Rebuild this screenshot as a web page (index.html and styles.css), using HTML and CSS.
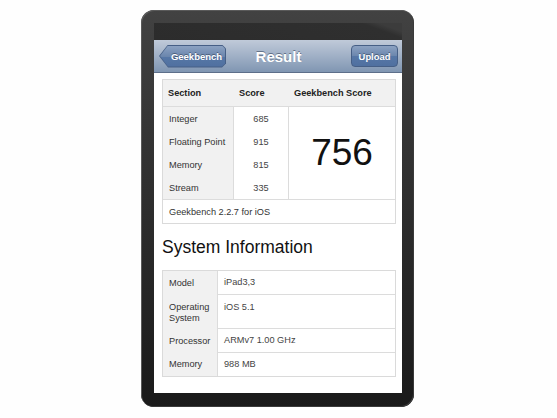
FILE: index.html
```html
<!DOCTYPE html>
<html>
<head>
<meta charset="utf-8">
<title>Geekbench Result</title>
<link rel="stylesheet" href="styles.css">
</head>
<body>
<div class="device">
  <div class="screen">
    <div class="status"></div>
    <div class="nav">
      <div class="back"><div class="back-in">Geekbench</div></div>
      <div class="title">Result</div>
      <div class="upload">Upload</div>
    </div>
    <div class="content">
      <div class="scores">
        <div class="shead">
          <div class="h1">Section</div>
          <div>Score</div>
          <div>Geekbench Score</div>
        </div>
        <div class="sbody">
          <div class="labels">
            <div class="row">Integer</div>
            <div class="row">Floating Point</div>
            <div class="row">Memory</div>
            <div class="row">Stream</div>
          </div>
          <div class="vals">
            <div class="row">685</div>
            <div class="row">915</div>
            <div class="row">815</div>
            <div class="row">335</div>
          </div>
          <div class="total">756</div>
        </div>
        <div class="sfoot">Geekbench 2.2.7 for iOS</div>
      </div>
      <h2 class="heading">System Information</h2>
      <div class="info">
        <div class="k r1">Model</div><div class="v r1">iPad3,3</div>
        <div class="k r2">Operating System</div><div class="v r2">iOS 5.1</div>
        <div class="k r3">Processor</div><div class="v r3">ARMv7 1.00 GHz</div>
        <div class="k r4">Memory</div><div class="v r4 last">988 MB</div>
      </div>
    </div>
  </div>
</div>
</body>
</html>
```
FILE: styles.css
```css
html, body {
  margin: 0;
  padding: 0;
  background: #fefefe;
}
body {
  font-family: "Liberation Sans", Arial, Helvetica, sans-serif;
}
.device {
  margin: 10px 0 0 141px;
  width: 273px;
  height: 397px;
  box-sizing: border-box;
  padding: 13px 12px 14px 13px;
  border-radius: 13px;
  background: linear-gradient(to bottom, #424242 0%, #333 35%, #242424 75%, #1a1a1a 100%);
  box-shadow: inset 1px 1px 0 #5a5a5a, inset -1px -1px 0 #3a3a3a;
}
.screen {
  height: 100%;
  display: flex;
  flex-direction: column;
  background: #fff;
}
.status {
  height: 17px;
  flex: none;
  background: linear-gradient(200deg, #3c3c3c 0%, #3c3c3c 8%, #2f2f2f 14%, #2c2c2c 100%);
}
.nav {
  height: 33px;
  flex: none;
  box-sizing: border-box;
  display: grid;
  grid-template-columns: 1fr auto 1fr;
  align-items: center;
  padding: 0 4px 0 5px;
  background: linear-gradient(to bottom, #c0cad9 0%, #a0b0c6 50%, #8096b2 100%);
  border-bottom: 1px solid #5d6f8a;
}
.back {
  justify-self: start;
  width: 67px;
  height: 23px;
  background: #465f86;
  clip-path: polygon(9px 0, 63px 0, 67px 4px, 67px 19px, 63px 23px, 9px 23px, 0 11.5px);
  display: flex;
}
.back-in {
  flex: 1;
  margin: 1px;
  padding-left: 8px;
  display: flex;
  align-items: center;
  justify-content: center;
  color: #fff;
  font-weight: bold;
  font-size: 9.5px;
  text-shadow: 0 -1px 0 rgba(0, 0, 0, 0.35);
  background: linear-gradient(to bottom, #8ca2c2 0%, #6b86ad 50%, #5677a6 52%, #5070a0 100%);
  clip-path: polygon(8px 0, 62px 0, 65px 3px, 65px 18px, 62px 21px, 8px 21px, 0 10.5px);
}
.title {
  color: #fff;
  font-weight: bold;
  font-size: 15px;
  text-shadow: 0 -1px 0 rgba(40, 55, 80, 0.55);
}
.upload {
  justify-self: end;
  width: 47px;
  height: 22px;
  box-sizing: border-box;
  border: 1px solid #465f86;
  border-radius: 4px;
  display: flex;
  align-items: center;
  justify-content: center;
  color: #fff;
  font-weight: bold;
  font-size: 9.4px;
  text-shadow: 0 -1px 0 rgba(0, 0, 0, 0.35);
  background: linear-gradient(to bottom, #8ca2c2 0%, #6b86ad 50%, #5677a6 52%, #5070a0 100%);
}
.content {
  flex: 1;
  padding: 6px 6px 0 8px;
  background: #fff;
}
.scores {
  border: 1px solid #dadada;
  font-size: 9.2px;
  color: #333;
}
.shead {
  display: grid;
  grid-template-columns: 70px 55px 1fr;
  height: 26px;
  align-items: center;
  background: #f1f1f1;
  border-bottom: 1px solid #dcdcdc;
  font-weight: bold;
  color: #222;
}
.shead div {
  padding-left: 6px;
}
.shead .h1 {
  padding-left: 5px;
}
.sbody {
  display: grid;
  grid-template-columns: 70px 55px 1fr;
}
.labels {
  background: #f1f1f1;
}
.row {
  height: 23px;
  display: flex;
  align-items: center;
}
.labels .row {
  padding-left: 6px;
}
.vals {
  border-left: 1px solid #dcdcdc;
}
.vals .row {
  justify-content: center;
  color: #444;
}
.total {
  border-left: 1px solid #dcdcdc;
  display: flex;
  align-items: center;
  justify-content: center;
  font-size: 37px;
  color: #111;
}
.sfoot {
  height: 23px;
  display: flex;
  align-items: center;
  padding-left: 6px;
  border-top: 1px solid #dcdcdc;
}
.heading {
  margin: 12px 0 12px 0;
  font-size: 17.5px;
  line-height: 22px;
  font-weight: normal;
  color: #111;
}
.info {
  border: 1px solid #dadada;
  display: grid;
  grid-template-columns: 54px 1fr;
  font-size: 9.2px;
  color: #333;
}
.k {
  background: #f1f1f1;
  padding: 0 4px 0 6px;
  line-height: 11px;
  box-sizing: border-box;
  display: flex;
  align-items: center;
}
.v {
  border-left: 1px solid #dcdcdc;
  border-bottom: 1px solid #dcdcdc;
  padding: 0 6px;
  line-height: 11px;
  color: #444;
  box-sizing: border-box;
  display: flex;
  align-items: center;
}
.r1, .r3 {
  height: 24px;
}
.r2 {
  height: 34px;
  align-items: flex-start;
  padding-top: 7px;
}
.r4 {
  height: 23px;
}
.v.last {
  border-bottom: none;
}
```
